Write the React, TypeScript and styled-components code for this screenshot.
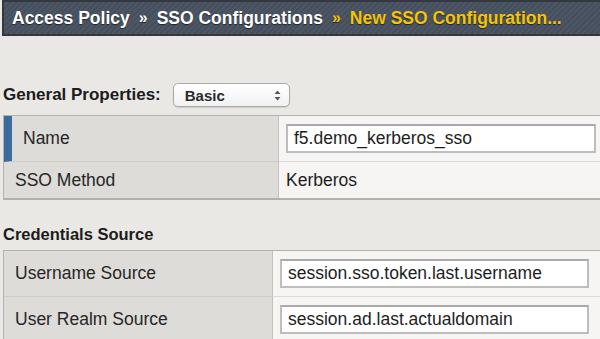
import styled, { createGlobalStyle } from "styled-components";

const GlobalStyle = createGlobalStyle`
    html, body {
        margin: 0;
        padding: 0;
        background: #e9e8e4;
        overflow: hidden;
    }
    body {
        font-family: "Liberation Sans", Arial, sans-serif;
        color: #222;
    }
`;

const Breadcrumb = styled.div`
    height: 32px;
    margin-left: 2px;
    border: 2px solid #34383f;
    border-right: 0;
    display: flex;
    align-items: center;
    gap: 9px;
    padding-left: 8px;
    background: repeating-linear-gradient(
        -45deg,
        #4d5664 0,
        #4d5664 2px,
        #464f5d 2px,
        #464f5d 4px
    );
    font-size: 17.5px;
    font-weight: 700;
    color: #fff;
    text-shadow: 0 1px 1px rgba(0, 0, 0, 0.55);
    white-space: nowrap;
`;

const Crumb = styled.span<{ $current?: boolean }>`
    color: ${(p) => (p.$current ? "#f6c500" : "#fff")};
`;

const Sep = styled.span<{ $current?: boolean }>`
    font-size: 16px;
    color: ${(p) => (p.$current ? "#f6c500" : "#fff")};
`;

const Content = styled.div`
    padding-left: 3px;
`;

const PropsRow = styled.div`
    display: flex;
    align-items: center;
    gap: 12px;
    margin-top: 46px;
    height: 26px;
`;

const SectionLabel = styled.div`
    font-size: 17px;
    font-weight: 700;
    color: #1c1c1c;
`;

const SelectBox = styled.div`
    width: 117px;
    height: 24px;
    box-sizing: border-box;
    border: 1px solid #a9a9a9;
    border-radius: 5px;
    background: linear-gradient(#ffffff, #f1f1f1);
    box-shadow: 0 1px 1px rgba(0, 0, 0, 0.12);
    display: flex;
    align-items: center;
    justify-content: space-between;
    padding: 0 8px 0 11px;
    font-size: 15px;
    font-weight: 700;
    color: #2a2a2a;
`;

const Arrows = styled.svg`
    width: 7px;
    height: 11px;
`;

const Table = styled.div<{ $labelWidth: number }>`
    margin-top: 7px;
    display: grid;
    grid-template-columns: ${(p) => p.$labelWidth}px 1fr;
    border-top: 1px solid #b2b2b0;
    border-left: 1px solid #b2b2b0;
    border-bottom: 2px solid #b0b0ae;
`;

const Label = styled.div<{ $h: number; $active?: boolean; $last?: boolean }>`
    height: ${(p) => p.$h}px;
    box-sizing: border-box;
    display: flex;
    align-items: center;
    padding-left: 11px;
    background: #dedcd8;
    border-right: 1px solid #c2c1be;
    border-bottom: ${(p) => (p.$last ? "0" : "1px solid #cfcdca")};
    border-left: ${(p) => (p.$active ? "8px solid #3b6a9c" : "0")};
    font-size: 17.5px;
    color: #262626;
`;

const Value = styled.div<{ $h: number; $last?: boolean }>`
    height: ${(p) => p.$h}px;
    box-sizing: border-box;
    display: flex;
    align-items: center;
    padding-left: 7px;
    background: #f6f5f3;
    border-bottom: ${(p) => (p.$last ? "0" : "1px solid #dcdbd8")};
    font-size: 17.5px;
    color: #1e1e1e;
`;

const Field = styled.div<{ $w: number }>`
    width: ${(p) => p.$w}px;
    height: 29px;
    box-sizing: border-box;
    border: 2px solid #bdbdbd;
    border-top-color: #a9a9a9;
    background: #fff;
    display: flex;
    align-items: center;
    padding-left: 6px;
    font-size: 17.5px;
    color: #1e1e1e;
`;

const SubTitle = styled.div`
    margin-top: 23px;
    height: 22px;
    display: flex;
    align-items: center;
    font-size: 16.5px;
    font-weight: 700;
    color: #1c1c1c;
`;

const SmallTable = styled(Table)`
    margin-top: 5px;
    border-bottom: 0;
`;

export default function App() {
    return (
        <>
            <GlobalStyle />
            <Breadcrumb>
                <Crumb>Access Policy</Crumb>
                <Sep>»</Sep>
                <Crumb>SSO Configurations</Crumb>
                <Sep $current>»</Sep>
                <Crumb $current>New SSO Configuration...</Crumb>
            </Breadcrumb>
            <Content>
                <PropsRow>
                    <SectionLabel>General Properties:</SectionLabel>
                    <SelectBox>
                        Basic
                        <Arrows viewBox="0 0 7 11">
                            <path d="M3.5 0.5 L6.5 4 L0.5 4 Z" fill="#555" />
                            <path d="M3.5 10.5 L6.5 7 L0.5 7 Z" fill="#555" />
                        </Arrows>
                    </SelectBox>
                </PropsRow>
                <Table $labelWidth={275}>
                    <Label $h={46} $active>
                        Name
                    </Label>
                    <Value $h={46}>
                        <Field $w={310}>f5.demo_kerberos_sso</Field>
                    </Value>
                    <Label $h={36} $last>
                        SSO Method
                    </Label>
                    <Value $h={36} $last>
                        Kerberos
                    </Value>
                </Table>
                <SubTitle>Credentials Source</SubTitle>
                <SmallTable $labelWidth={269}>
                    <Label $h={46}>Username Source</Label>
                    <Value $h={46}>
                        <Field $w={309}>session.sso.token.last.username</Field>
                    </Value>
                    <Label $h={46}>User Realm Source</Label>
                    <Value $h={46}>
                        <Field $w={309}>session.ad.last.actualdomain</Field>
                    </Value>
                </SmallTable>
            </Content>
        </>
    );
}
